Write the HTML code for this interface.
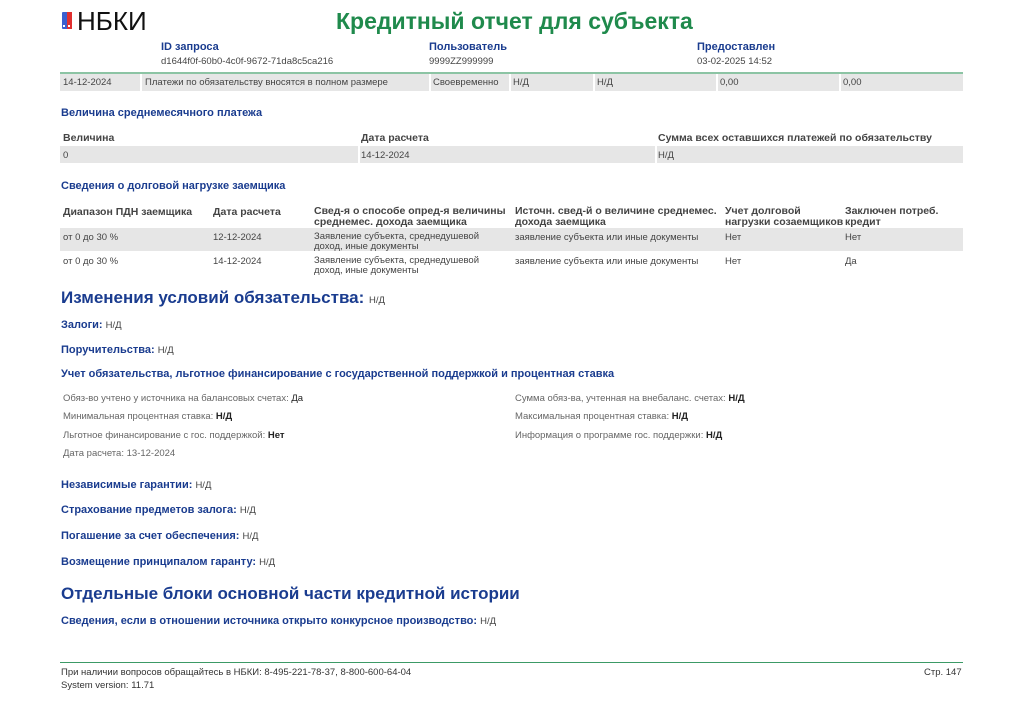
<!DOCTYPE html>
<html><head><meta charset="utf-8"><style>
body{margin:0;width:1024px;height:724px;background:#fff;font-family:"Liberation Sans",sans-serif;position:relative;overflow:hidden;color:#333}
.a{position:absolute;white-space:nowrap}
.s{font-size:9.5px;color:#444}
.h{font-size:11px;font-weight:bold;color:#1a3c8f}
.th{font-size:10.5px;font-weight:bold;color:#444}
.big{font-size:17px;font-weight:bold;color:#1a3c8f}
.nd{font-size:9.5px;font-weight:normal;color:#444}
.g{position:absolute;background:#e6e6e6}
b.k{color:#222}
</style></head><body>
<div class="a" style="left:62px;top:12px;width:5px;height:17px;background:#3a5fcf;border-radius:1px 0 0 1px"></div>
<div class="a" style="left:67px;top:12px;width:5px;height:17px;background:#e03030"></div>
<div class="a" style="left:63px;top:25px;width:2px;height:2px;background:#fff"></div>
<div class="a" style="left:68px;top:25px;width:2px;height:2px;background:#fff"></div>
<div class="a" style="left:77px;top:6px;font-size:26px;color:#111">НБКИ</div>
<div class="a" style="left:336px;top:8px;font-size:23px;font-weight:bold;color:#1f8a4c">Кредитный отчет для субъекта</div>
<div class="a h" style="left:161px;top:41px">ID запроса</div>
<div class="a s" style="left:161px;top:56px">d1644f0f-60b0-4c0f-9672-71da8c5ca216</div>
<div class="a h" style="left:429px;top:41px">Пользователь</div>
<div class="a s" style="left:429px;top:56px">9999ZZ999999</div>
<div class="a h" style="left:697px;top:41px">Предоставлен</div>
<div class="a s" style="left:697px;top:56px">03-02-2025 14:52</div>
<div class="a" style="left:60px;top:72px;width:903px;height:2px;background:#8cc4a4"></div>
<div class="g" style="left:60px;top:74px;width:903px;height:17px"></div>
<div class="a" style="left:140px;top:74px;width:2px;height:17px;background:#fff"></div>
<div class="a" style="left:429px;top:74px;width:2px;height:17px;background:#fff"></div>
<div class="a" style="left:509px;top:74px;width:2px;height:17px;background:#fff"></div>
<div class="a" style="left:593px;top:74px;width:2px;height:17px;background:#fff"></div>
<div class="a" style="left:716px;top:74px;width:2px;height:17px;background:#fff"></div>
<div class="a" style="left:839px;top:74px;width:2px;height:17px;background:#fff"></div>
<div class="a s" style="left:63px;top:77px">14-12-2024</div>
<div class="a s" style="left:145px;top:77px">Платежи по обязательству вносятся в полном размере</div>
<div class="a s" style="left:433px;top:77px">Своевременно</div>
<div class="a s" style="left:513px;top:77px">Н/Д</div>
<div class="a s" style="left:597px;top:77px">Н/Д</div>
<div class="a s" style="left:720px;top:77px">0,00</div>
<div class="a s" style="left:843px;top:77px">0,00</div>

<div class="a h" style="left:61px;top:107px">Величина среднемесячного платежа</div>
<div class="a th" style="left:63px;top:132px">Величина</div>
<div class="a th" style="left:361px;top:132px">Дата расчета</div>
<div class="a th" style="left:658px;top:132px">Сумма всех оставшихся платежей по обязательству</div>
<div class="g" style="left:60px;top:146px;width:903px;height:17px"></div>
<div class="a" style="left:358px;top:146px;width:2px;height:17px;background:#fff"></div>
<div class="a" style="left:655px;top:146px;width:2px;height:17px;background:#fff"></div>
<div class="a s" style="left:63px;top:150px">0</div>
<div class="a s" style="left:361px;top:150px">14-12-2024</div>
<div class="a s" style="left:658px;top:150px">Н/Д</div>

<div class="a h" style="left:61px;top:180px">Сведения о долговой нагрузке заемщика</div>
<div class="a th" style="left:63px;top:206px">Диапазон ПДН заемщика</div>
<div class="a th" style="left:213px;top:206px">Дата расчета</div>
<div class="a th" style="left:314px;top:206px;line-height:11px">Свед-я о способе опред-я величины<br>среднемес. дохода заемщика</div>
<div class="a th" style="left:515px;top:206px;line-height:11px">Источн. свед-й о величине среднемес.<br>дохода заемщика</div>
<div class="a th" style="left:725px;top:206px;line-height:11px">Учет долговой<br>нагрузки созаемщиков</div>
<div class="a th" style="left:845px;top:206px;line-height:11px">Заключен потреб.<br>кредит</div>
<div class="g" style="left:60px;top:228px;width:903px;height:23px"></div>
<div class="a s" style="left:63px;top:232px">от 0 до 30 %</div>
<div class="a s" style="left:213px;top:232px">12-12-2024</div>
<div class="a s" style="left:314px;top:232px;line-height:10px">Заявление субъекта, среднедушевой<br>доход, иные документы</div>
<div class="a s" style="left:515px;top:232px">заявление субъекта или иные документы</div>
<div class="a s" style="left:725px;top:232px">Нет</div>
<div class="a s" style="left:845px;top:232px">Нет</div>
<div class="a s" style="left:63px;top:256px">от 0 до 30 %</div>
<div class="a s" style="left:213px;top:256px">14-12-2024</div>
<div class="a s" style="left:314px;top:256px;line-height:10px">Заявление субъекта, среднедушевой<br>доход, иные документы</div>
<div class="a s" style="left:515px;top:256px">заявление субъекта или иные документы</div>
<div class="a s" style="left:725px;top:256px">Нет</div>
<div class="a s" style="left:845px;top:256px">Да</div>

<div class="a big" style="left:61px;top:288px">Изменения условий обязательства: <span class="nd">Н/Д</span></div>
<div class="a h" style="left:61px;top:319px">Залоги: <span class="nd">Н/Д</span></div>
<div class="a h" style="left:61px;top:344px">Поручительства: <span class="nd">Н/Д</span></div>
<div class="a h" style="left:61px;top:368px">Учет обязательства, льготное финансирование с государственной поддержкой и процентная ставка</div>
<div class="a s" style="left:63px;top:393px;color:#666">Обяз-во учтено у источника на балансовых счетах: <b class="k" style="font-weight:normal">Да</b></div>
<div class="a s" style="left:63px;top:411px;color:#666">Минимальная процентная ставка: <b class="k">Н/Д</b></div>
<div class="a s" style="left:63px;top:430px;color:#666">Льготное финансирование с гос. поддержкой: <b class="k">Нет</b></div>
<div class="a s" style="left:63px;top:448px;color:#666">Дата расчета: <span class="k">13-12-2024</span></div>
<div class="a s" style="left:515px;top:393px;color:#666">Сумма обяз-ва, учтенная на внебаланс. счетах: <b class="k">Н/Д</b></div>
<div class="a s" style="left:515px;top:411px;color:#666">Максимальная процентная ставка: <b class="k">Н/Д</b></div>
<div class="a s" style="left:515px;top:430px;color:#666">Информация о программе гос. поддержки: <b class="k">Н/Д</b></div>

<div class="a h" style="left:61px;top:479px">Независимые гарантии: <span class="nd">Н/Д</span></div>
<div class="a h" style="left:61px;top:504px">Страхование предметов залога: <span class="nd">Н/Д</span></div>
<div class="a h" style="left:61px;top:530px">Погашение за счет обеспечения: <span class="nd">Н/Д</span></div>
<div class="a h" style="left:61px;top:556px">Возмещение принципалом гаранту: <span class="nd">Н/Д</span></div>
<div class="a big" style="left:61px;top:584px">Отдельные блоки основной части кредитной истории</div>
<div class="a h" style="left:61px;top:615px">Сведения, если в отношении источника открыто конкурсное производство: <span class="nd">Н/Д</span></div>

<div class="a" style="left:60px;top:662px;width:903px;height:1px;background:#3c9a66"></div>
<div class="a s" style="left:61px;top:667px;color:#333">При наличии вопросов обращайтесь в НБКИ: 8-495-221-78-37, 8-800-600-64-04</div>
<div class="a s" style="left:61px;top:680px;color:#333">System version: 11.71</div>
<div class="a s" style="left:924px;top:667px;color:#333">Стр. 147</div>
</body></html>
